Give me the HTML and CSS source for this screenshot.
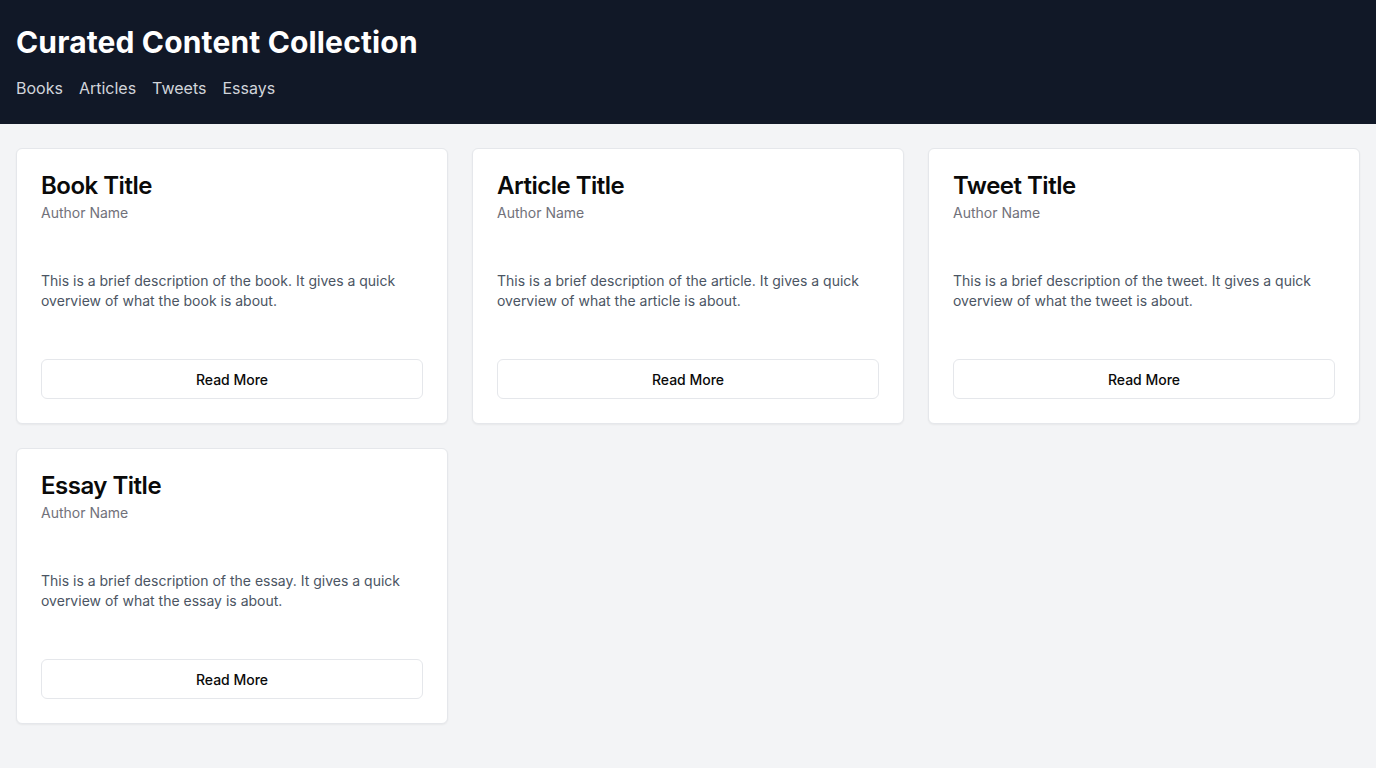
FILE: index.html
```html
<!DOCTYPE html>
<html lang="en">
<head>
<meta charset="utf-8">
<title>Curated Content Collection</title>
<link rel="stylesheet" href="styles.css">
</head>
<body>
<header class="header">
  <h1 class="site-title">Curated Content Collection</h1>
  <nav class="nav">
    <a href="#" class="nav-link">Books</a>
    <a href="#" class="nav-link">Articles</a>
    <a href="#" class="nav-link">Tweets</a>
    <a href="#" class="nav-link">Essays</a>
  </nav>
</header>
<main class="main">
  <div class="grid">
    <div class="card">
      <h2 class="card-title">Book Title</h2>
      <p class="card-author">Author Name</p>
      <p class="card-desc">This is a brief description of the book. It gives a quick overview of what the book is about.</p>
      <button class="btn">Read More</button>
    </div>
    <div class="card">
      <h2 class="card-title">Article Title</h2>
      <p class="card-author">Author Name</p>
      <p class="card-desc">This is a brief description of the article. It gives a quick overview of what the article is about.</p>
      <button class="btn">Read More</button>
    </div>
    <div class="card">
      <h2 class="card-title">Tweet Title</h2>
      <p class="card-author">Author Name</p>
      <p class="card-desc">This is a brief description of the tweet. It gives a quick overview of what the tweet is about.</p>
      <button class="btn">Read More</button>
    </div>
    <div class="card">
      <h2 class="card-title">Essay Title</h2>
      <p class="card-author">Author Name</p>
      <p class="card-desc">This is a brief description of the essay. It gives a quick overview of what the essay is about.</p>
      <button class="btn">Read More</button>
    </div>
  </div>
</main>
</body>
</html>
```

FILE: styles.css
```css
* { box-sizing: border-box; }
html, body { margin: 0; padding: 0; }
body {
  font-family: Inter, "Noto Sans", "Liberation Sans", sans-serif;
  background: #f3f4f6;
  min-height: 100vh;
  color: #0a0a0a;
}
.header {
  background: #111827;
  padding: 24px 16px;
}
.site-title {
  margin: 0;
  font-size: 30px;
  line-height: 36px;
  font-weight: 700;
  letter-spacing: 0.15px;
  color: #ffffff;
}
.nav {
  margin-top: 16px;
  display: flex;
  gap: 16px;
}
.nav-link {
  color: #d1d5db;
  text-decoration: none;
  font-size: 16px;
  line-height: 24px;
}
.main {
  padding: 24px 16px;
}
.grid {
  display: grid;
  grid-template-columns: repeat(3, 1fr);
  gap: 24px 24px;
}
.card {
  background: #ffffff;
  border: 1px solid #e5e7eb;
  border-radius: 6px;
  box-shadow: 0 1px 2px rgba(0, 0, 0, 0.05);
  padding: 25px 24px 24px;
  display: flex;
  flex-direction: column;
}
.card-title {
  margin: 0;
  font-size: 24px;
  line-height: 24px;
  font-weight: 600;
  letter-spacing: -0.5px;
  color: #0a0a0a;
}
.card-author {
  margin: 5px 0 0;
  font-size: 14px;
  line-height: 20px;
  color: #71717a;
}
.card-desc {
  margin: 48px 0 0;
  font-size: 14px;
  line-height: 20px;
  color: #4b5563;
}
.btn {
  margin-top: 48px;
  height: 40px;
  width: 100%;
  background: #ffffff;
  border: 1px solid #e5e7eb;
  border-radius: 6px;
  font-family: inherit;
  font-size: 14px;
  font-weight: 500;
  color: #0a0a0a;
  cursor: pointer;
}
```
